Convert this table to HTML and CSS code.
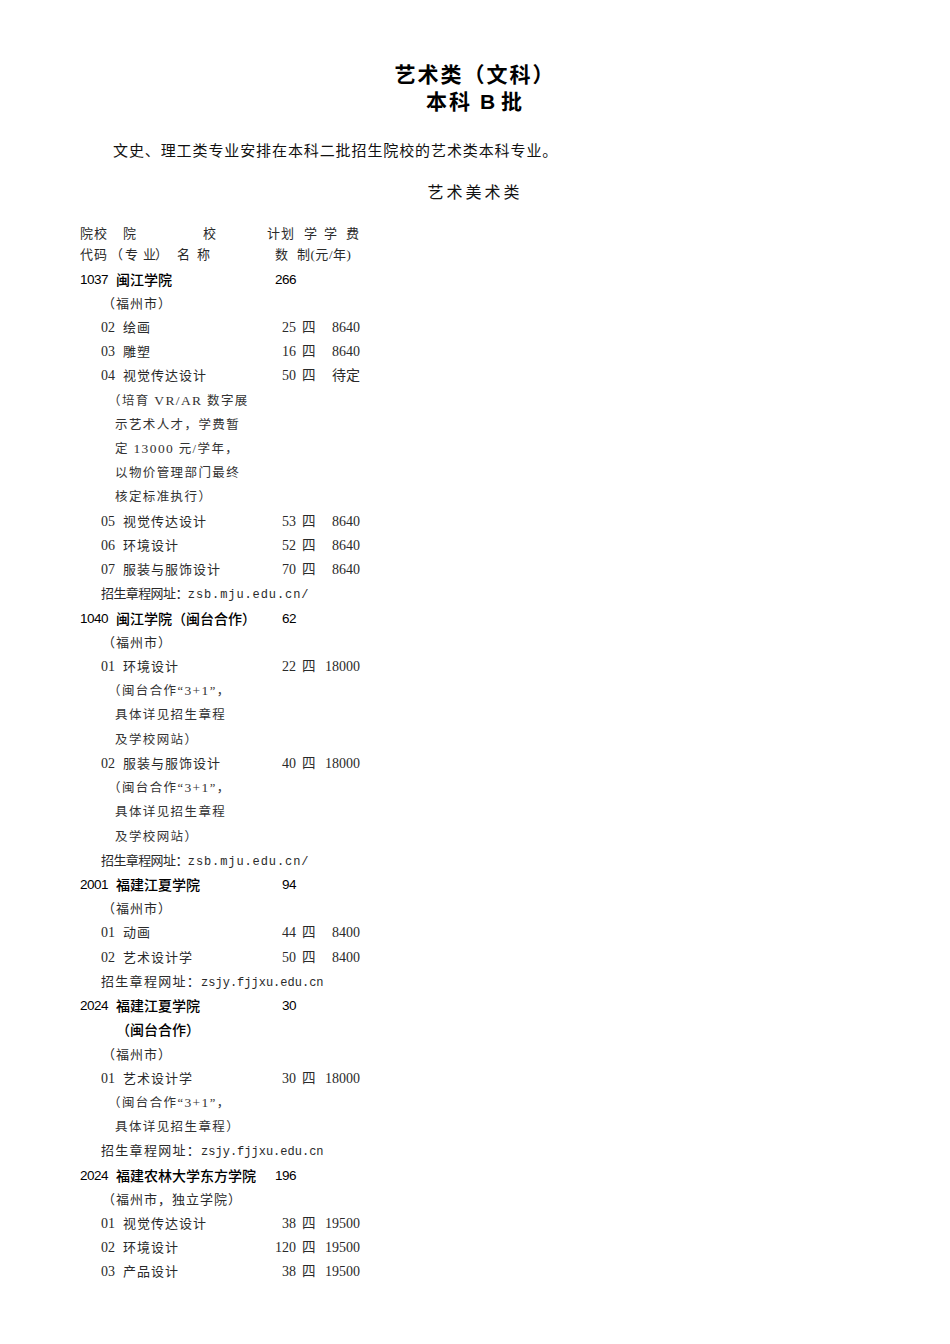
FILE: index.html
```html
<!DOCTYPE html>
<html lang="zh-CN">
<head>
<meta charset="utf-8">
<title>艺术类（文科）本科B批</title>
<link rel="stylesheet" href="styles.css">
</head>
<body>
<div class="page">
  <h1 class="title">
    <span class="t1">艺术类（文科）</span>
    <span class="t2">本科<span class="b">B</span>批</span>
  </h1>
  <p class="intro">文史、理工类专业安排在本科二批招生院校的艺术类本科专业。</p>
  <h2 class="cat">艺术美术类</h2>

  <div class="table">
    <div class="hd hd1">
      <span class="h-a">院校</span><span class="h-b">院</span><span class="h-c">校</span><span class="h-d">计划</span><span class="h-e">学</span><span class="h-f">学</span><span>费</span>
    </div>
    <div class="hd hd2">
      <span class="h2-a">代码</span><span class="h2-b">（</span><span class="h2-c">专</span><span class="h2-d">业</span><span class="h2-e">）</span><span class="h2-f">名</span><span class="h2-g">称</span><span class="h2-h">数</span><span class="h2-i">制<span class="lat">(</span>元<span class="lat">/</span>年<span class="lat">)</span></span>
    </div>

    <div class="rows">
      <div class="row sch"><span class="code">1037</span><span class="name">闽江学院</span><span class="plan">266</span></div>
      <div class="row loc"><span class="full">（福州市）</span></div>
      <div class="row maj"><span class="mname"><span class="no">02</span>绘画</span><span class="plan">25</span><span class="len">四</span><span class="fee">8640</span></div>
      <div class="row maj"><span class="mname"><span class="no">03</span>雕塑</span><span class="plan">16</span><span class="len">四</span><span class="fee">8640</span></div>
      <div class="row maj"><span class="mname"><span class="no">04</span>视觉传达设计</span><span class="plan">50</span><span class="len">四</span><span class="fee">待定</span></div>
      <div class="row note first"><span class="full">（培育 <span class="lat">VR/AR</span> 数字展</span></div>
      <div class="row note"><span class="full">示艺术人才，学费暂</span></div>
      <div class="row note"><span class="full">定 <span class="lat">13000</span> 元/学年，</span></div>
      <div class="row note"><span class="full">以物价管理部门最终</span></div>
      <div class="row note"><span class="full">核定标准执行）</span></div>
      <div class="row maj"><span class="mname"><span class="no">05</span>视觉传达设计</span><span class="plan">53</span><span class="len">四</span><span class="fee">8640</span></div>
      <div class="row maj"><span class="mname"><span class="no">06</span>环境设计</span><span class="plan">52</span><span class="len">四</span><span class="fee">8640</span></div>
      <div class="row maj"><span class="mname"><span class="no">07</span>服装与服饰设计</span><span class="plan">70</span><span class="len">四</span><span class="fee">8640</span></div>
      <div class="row url narrow"><span class="full">招生章程网址：<span class="u">zsb.mju.edu.cn/</span></span></div>

      <div class="row sch"><span class="code">1040</span><span class="name">闽江学院（闽台合作）</span><span class="plan">62</span></div>
      <div class="row loc"><span class="full">（福州市）</span></div>
      <div class="row maj"><span class="mname"><span class="no">01</span>环境设计</span><span class="plan">22</span><span class="len">四</span><span class="fee">18000</span></div>
      <div class="row note first"><span class="full">（闽台合作“<span class="lat">3+1</span>”，</span></div>
      <div class="row note"><span class="full">具体详见招生章程</span></div>
      <div class="row note"><span class="full">及学校网站）</span></div>
      <div class="row maj"><span class="mname"><span class="no">02</span>服装与服饰设计</span><span class="plan">40</span><span class="len">四</span><span class="fee">18000</span></div>
      <div class="row note first"><span class="full">（闽台合作“<span class="lat">3+1</span>”，</span></div>
      <div class="row note"><span class="full">具体详见招生章程</span></div>
      <div class="row note"><span class="full">及学校网站）</span></div>
      <div class="row url narrow"><span class="full">招生章程网址：<span class="u">zsb.mju.edu.cn/</span></span></div>

      <div class="row sch"><span class="code">2001</span><span class="name">福建江夏学院</span><span class="plan">94</span></div>
      <div class="row loc"><span class="full">（福州市）</span></div>
      <div class="row maj"><span class="mname"><span class="no">01</span>动画</span><span class="plan">44</span><span class="len">四</span><span class="fee">8400</span></div>
      <div class="row maj"><span class="mname"><span class="no">02</span>艺术设计学</span><span class="plan">50</span><span class="len">四</span><span class="fee">8400</span></div>
      <div class="row url wide"><span class="full">招生章程网址：<span class="u">zsjy.fjjxu.edu.cn</span></span></div>

      <div class="row sch"><span class="code">2024</span><span class="name">福建江夏学院</span><span class="plan">30</span></div>
      <div class="row sch"><span class="code"></span><span class="name">（闽台合作）</span></div>
      <div class="row loc"><span class="full">（福州市）</span></div>
      <div class="row maj"><span class="mname"><span class="no">01</span>艺术设计学</span><span class="plan">30</span><span class="len">四</span><span class="fee">18000</span></div>
      <div class="row note first"><span class="full">（闽台合作“<span class="lat">3+1</span>”，</span></div>
      <div class="row note"><span class="full">具体详见招生章程）</span></div>
      <div class="row url wide"><span class="full">招生章程网址：<span class="u">zsjy.fjjxu.edu.cn</span></span></div>

      <div class="row sch"><span class="code">2024</span><span class="name">福建农林大学东方学院</span><span class="plan">196</span></div>
      <div class="row loc"><span class="full">（福州市，独立学院）</span></div>
      <div class="row maj"><span class="mname"><span class="no">01</span>视觉传达设计</span><span class="plan">38</span><span class="len">四</span><span class="fee">19500</span></div>
      <div class="row maj"><span class="mname"><span class="no">02</span>环境设计</span><span class="plan">120</span><span class="len">四</span><span class="fee">19500</span></div>
      <div class="row maj"><span class="mname"><span class="no">03</span>产品设计</span><span class="plan">38</span><span class="len">四</span><span class="fee">19500</span></div>
    </div>
  </div>
</div>
</body>
</html>
```

FILE: styles.css
```css
html, body {
  margin: 0;
  padding: 0;
  background: #fff;
}

body {
  width: 950px;
  color: #000;
  font-family: "Liberation Sans", "Noto Sans CJK SC", sans-serif;
}

.page {
  padding-top: 61px;
}

/* ---------- headings ---------- */
.title {
  margin: 0;
  font-size: 21px;
  font-weight: 700;
  line-height: 27px;
  text-align: center;
  letter-spacing: 2px;
}

.title .t1,
.title .t2 {
  display: block;
}

.title .b {
  font-family: "Liberation Sans", sans-serif;
  margin: 0 4px 0 8px;
}

.intro {
  margin: 24px 0 0 113px;
  font-size: 15px;
  line-height: 24px;
  letter-spacing: 0.9px;
  color: #111;
}

.cat {
  margin: 18px 0 0;
  font-size: 16px;
  font-weight: 400;
  line-height: 24px;
  letter-spacing: 3px;
  text-align: center;
  color: #111;
}

/* ---------- table ---------- */
.table {
  margin: 18px 0 0 80px;
  font-family: "Liberation Serif", "Noto Sans CJK SC", serif;
  color: #2a2a2a;
}

.hd {
  display: flex;
  height: 21px;
  line-height: 21px;
  font-size: 13px;
  white-space: nowrap;
}

.hd .lat {
  font-family: "Liberation Serif", serif;
  font-size: 13px;
}

.h-a { width: 43px; letter-spacing: 1px; }
.h-b { width: 80px; }
.h-c { width: 64px; }
.h-d { width: 37px; letter-spacing: 1px; }
.h-e { width: 20px; }
.h-f { width: 22px; }

.h2-a { width: 30px; letter-spacing: 1px; }
.h2-b { width: 15px; }
.h2-c { width: 18px; }
.h2-d { width: 12px; }
.h2-e { width: 22px; }
.h2-f { width: 20px; }
.h2-g { width: 78px; }
.h2-h { width: 22px; }
.h2-i { letter-spacing: 0.5px; }

.rows {
  margin-top: 2.5px;
}

.row {
  display: grid;
  grid-template-columns: 36px 150px 30px 21px 43px;
  height: 24.22px;
  line-height: 24.22px;
  white-space: nowrap;
  font-size: 13px;
}

.full {
  grid-column: 1 / -1;
}

/* school row */
.sch {
  color: #000;
  font-family: "Liberation Sans", "Noto Sans CJK SC", sans-serif;
}

.sch .code,
.sch .plan {
  font-size: 13.5px;
  letter-spacing: -0.5px;
}

.sch .plan {
  letter-spacing: -0.5px;
  padding-right: 0;
}

.sch .name {
  font-size: 14px;
  font-weight: 500;
}

.plan {
  text-align: right;
}

/* major row */
.maj .mname {
  grid-column: 1 / 3;
  padding-left: 21px;
  letter-spacing: 1px;
}

.maj .no {
  display: inline-block;
  width: 22px;
  font-size: 14px;
  letter-spacing: 0;
}

.maj .plan,
.maj .fee {
  font-size: 14px;
}

.maj .len {
  padding-left: 6px;
  font-size: 13.5px;
}

.fee {
  text-align: right;
}

/* location row */
.loc .full {
  padding-left: 22px;
  letter-spacing: 1px;
}

/* note rows */
.note {
  color: #333;
}

.note .full {
  padding-left: 35px;
  font-size: 12.5px;
  letter-spacing: 1.4px;
}

.note.first .full {
  padding-left: 28px;
}

.note .lat {
  font-family: "Liberation Serif", serif;
  font-size: 13.5px;
}

/* url row */
.url .full {
  padding-left: 21px;
}

.url.narrow .full {
  letter-spacing: -0.6px;
}

.url.wide .full {
  letter-spacing: 1.3px;
}

.url .u {
  font-family: "Liberation Mono", monospace;
  font-size: 12px;
  letter-spacing: 0;
}

.url.narrow .u {
  letter-spacing: 0.9px;
}
```
